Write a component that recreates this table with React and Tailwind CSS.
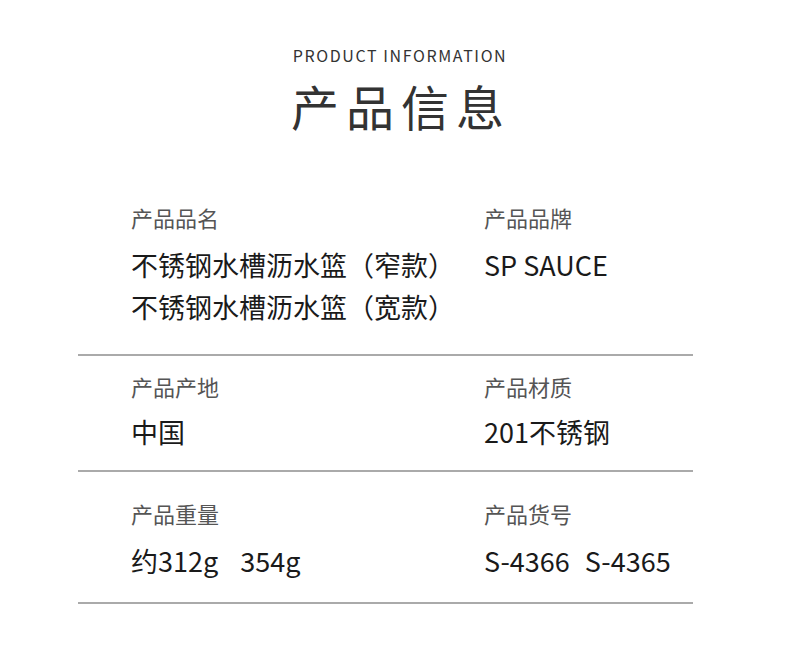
import React from 'react';

const rows = [
  {
    left: { label: '产品品名', values: [['不锈钢水槽沥水篮（窄款）'], ['不锈钢水槽沥水篮（宽款）']] },
    right: { label: '产品品牌', values: [['SP SAUCE']] },
    pad: 'pt-[202px] pb-[26px]',
    gap: 'mt-[12px]',
  },
  {
    left: { label: '产品产地', values: [['中国']] },
    right: { label: '产品材质', values: [['201不锈钢']] },
    pad: 'pt-[15px] pb-[17px]',
    gap: 'mt-[10px]',
  },
  {
    left: { label: '产品重量', values: [['约312g', '354g']], space: 'gap-[22px]' },
    right: { label: '产品货号', values: [['S-4366', 'S-4365']], space: 'gap-[15px]' },
    pad: 'pt-[26px] pb-[20px]',
    gap: 'mt-[12px]',
  },
];

const Field = ({ label, values, gap, space }) => (
  <div>
    <div className="text-[22px] leading-[30px] text-[#555]">{label}</div>
    <div className={gap}>
      {values.map((parts) => (
        <div key={parts.join()} className={`flex ${space} text-[27px] leading-[42px] text-[#1a1a1a]`}>
          {parts.map((p) => (
            <span key={p}>{p}</span>
          ))}
        </div>
      ))}
    </div>
  </div>
);

const App = () => {
  return (
    <div
      className="w-[790px] h-[657px] bg-white relative overflow-hidden"
      style={{ fontFamily: '"Noto Sans CJK SC", "Noto Sans", sans-serif' }}
    >
      {/* Heading */}
      <div className="absolute top-0 left-0 w-full flex flex-col items-center pt-[44px]">
        <div className="text-[16px] leading-[22px] tracking-[1.6px] text-[#333] pl-[10px]">
          PRODUCT INFORMATION
        </div>
        <div className="text-[48px] leading-[60px] tracking-[7px] text-[#333] mt-[9px] pl-[12px]">
          产品信息
        </div>
      </div>

      {/* Rows */}
      <div className="ml-[78px] w-[615px]">
        {rows.map((row, i) => (
          <div key={i} className={`border-b-2 border-[#aaa] ${row.pad}`}>
            <div className="grid grid-cols-[353px_1fr] pl-[53px]">
              <Field {...row.left} gap={row.gap} />
              <Field {...row.right} gap={row.gap} />
            </div>
          </div>
        ))}
      </div>
    </div>
  );
};

export default App;
